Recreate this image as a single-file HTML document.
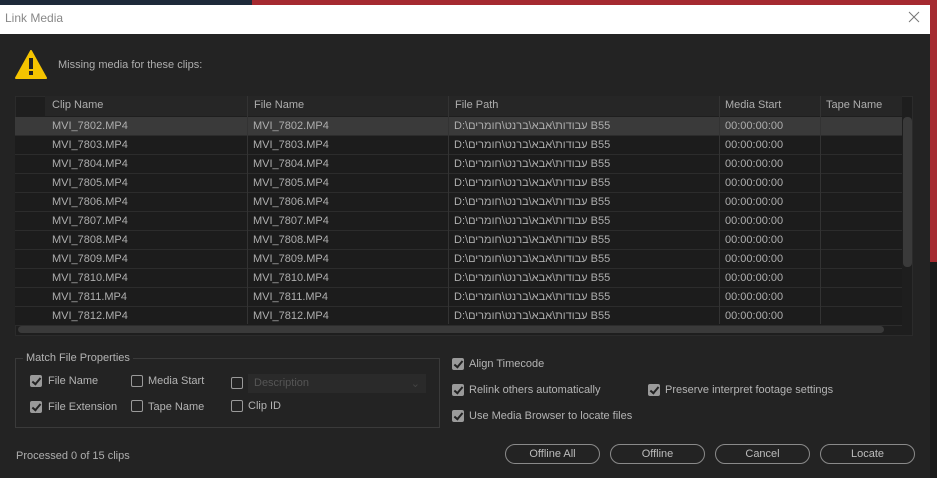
<!DOCTYPE html><html><head><meta charset="utf-8"><style>
*{margin:0;padding:0;box-sizing:border-box}
body{width:937px;height:478px;overflow:hidden;background:#232323;font-family:"Liberation Sans",sans-serif;font-size:11px;color:#aeaeae;position:relative}
.a{position:absolute}
.row{position:absolute;left:15px;width:887px;height:19px;background:#1c1c1c;border-bottom:1px solid #2c2c2c}
.row span{position:absolute;top:3px;white-space:nowrap}
.cb{position:absolute;width:12px;height:12px;border-radius:2px}
.on{background:#9a9a9a}
.on:after{content:"";position:absolute;left:4px;top:1px;width:3px;height:7px;border:solid #222;border-width:0 2px 2px 0;transform:rotate(40deg)}
.off{border:1.5px solid #9a9a9a}
.lbl{position:absolute;white-space:nowrap;font-size:11px;color:#b4b4b4}
.btn{position:absolute;top:444px;height:20px;width:95px;border:1px solid #8a8a8a;border-radius:10px;text-align:center;line-height:18px;color:#bcbcbc}
</style></head><body>
<div class="a" style="left:0;top:0;width:252px;height:6px;background:#1e2a3a"></div>
<div class="a" style="left:252px;top:0;width:685px;height:6px;background:#a52a30"></div>
<div class="a" style="left:930px;top:0;width:7px;height:262px;background:#a52a30"></div>
<div class="a" style="left:930px;top:262px;width:7px;height:216px;background:#1a1a1a"></div>
<div class="a" style="left:0;top:5px;width:930px;height:29px;background:#fff"></div>
<div class="a" style="left:5px;top:11px;color:#888;font-size:12px">Link Media</div>
<svg class="a" style="left:908px;top:11px" width="12" height="12"><path d="M1 1L11 11M11 1L1 11" stroke="#777" stroke-width="1"/></svg>
<svg class="a" style="left:15px;top:50px" width="32" height="29"><path d="M16 1 L31 28 L1 28 Z" fill="#f5c400" stroke="#f5c400" stroke-linejoin="round" stroke-width="2"/><rect x="14" y="8" width="4" height="11" fill="#222"/><rect x="14" y="21" width="4" height="4" fill="#222"/></svg>
<div class="a" style="left:58px;top:59px">Missing media for these clips:</div>
<div class="a" style="left:15px;top:96px;width:898px;height:240px;background:#1e1e1e;border:1px solid #2b2b2b"></div>
<div class="a" style="left:45px;top:96px;width:857px;height:20px;background:#262626"></div>
<div class="a" style="left:52px;top:99px">Clip Name</div>
<div class="a" style="left:254px;top:99px">File Name</div>
<div class="a" style="left:455px;top:99px">File Path</div>
<div class="a" style="left:725px;top:99px">Media Start</div>
<div class="a" style="left:826px;top:99px">Tape Name</div>
<div id="rows"></div>
<div class="a" style="left:247px;top:96px;width:1px;height:228px;background:#333"></div>
<div class="a" style="left:448px;top:96px;width:1px;height:228px;background:#333"></div>
<div class="a" style="left:719px;top:96px;width:1px;height:228px;background:#333"></div>
<div class="a" style="left:820px;top:96px;width:1px;height:228px;background:#333"></div>
<div class="a" style="left:903px;top:117px;width:9px;height:150px;background:#3a3a3a;border-radius:4px"></div>
<div class="a" style="left:18px;top:326px;width:866px;height:7px;background:#3a3a3a;border-radius:4px"></div>
<div class="a" style="left:15px;top:358px;width:425px;height:70px;border:1px solid #3a3a3a"></div>
<div class="a" style="left:23px;top:352px;background:#232323;padding:0 3px;color:#b4b4b4">Match File Properties</div>
<div class="cb on" style="left:30px;top:375px"></div><div class="lbl" style="left:48px;top:375px">File Name</div>
<div class="cb off" style="left:131px;top:375px"></div><div class="lbl" style="left:148px;top:375px">Media Start</div>
<div class="cb off" style="left:231px;top:377px"></div>
<div class="a" style="left:248px;top:374px;width:178px;height:19px;background:#2a2a2a;color:#555;padding:3px 6px">Description<span style="float:right;color:#444">⌄</span></div>
<div class="cb on" style="left:30px;top:401px"></div><div class="lbl" style="left:48px;top:401px">File Extension</div>
<div class="cb off" style="left:131px;top:400px"></div><div class="lbl" style="left:148px;top:401px">Tape Name</div>
<div class="cb off" style="left:231px;top:400px"></div><div class="lbl" style="left:248px;top:400px">Clip ID</div>
<div class="cb on" style="left:452px;top:358px"></div><div class="lbl" style="left:469px;top:358px">Align Timecode</div>
<div class="cb on" style="left:452px;top:384px"></div><div class="lbl" style="left:469px;top:384px">Relink others automatically</div>
<div class="cb on" style="left:648px;top:384px"></div><div class="lbl" style="left:665px;top:384px">Preserve interpret footage settings</div>
<div class="cb on" style="left:452px;top:410px"></div><div class="lbl" style="left:469px;top:410px">Use Media Browser to locate files</div>
<div class="a" style="left:16px;top:450px">Processed 0 of 15 clips</div>
<div class="btn" style="left:505px">Offline All</div>
<div class="btn" style="left:610px">Offline</div>
<div class="btn" style="left:715px">Cancel</div>
<div class="btn" style="left:820px">Locate</div>
<script>
var h='';for(var i=0;i<11;i++){var n=7802+i,y=117+i*19;h+='<div class="row" style="top:'+y+'px;'+(i==0?'background:#3a3a3a':'')+'"><span style="left:37px">MVI_'+n+'.MP4</span><span style="left:238px">MVI_'+n+'.MP4</span><span style="left:439px;font-family:\'Liberation Sans\',\'DejaVu Sans\',sans-serif">D:\\עבודות\\אבא\\ברנט\\חומרים B55</span><span style="left:710px">00:00:00:00</span></div>';}
document.getElementById('rows').innerHTML=h;
</script>
</body></html>
